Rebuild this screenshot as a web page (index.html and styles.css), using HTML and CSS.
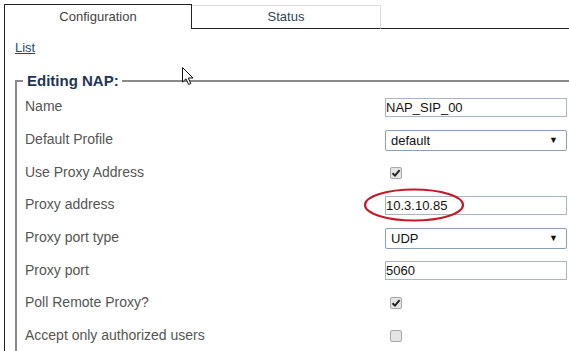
FILE: index.html
```html
<!DOCTYPE html>
<html lang="en">
<head>
  <meta charset="UTF-8" />
  <title>NAP Configuration</title>
  <link rel="stylesheet" href="styles.css">
</head>
<body>
  <!-- Tabs -->
  <div class="tabs">
    <div class="tab active">Configuration</div>
    <div class="tab">Status</div>
    <div class="tab-fill"></div>
  </div>

  <div class="panel">
    <a class="list-link" href="#">List</a>

    <fieldset class="nap">
      <legend>Editing NAP:</legend>

      <div class="row">
        <span class="label">Name</span>
        <input class="text" type="text" value="NAP_SIP_00">
      </div>
      <div class="row">
        <span class="label">Default Profile</span>
        <div class="select"><span>default</span><span class="arrow">&#9660;</span></div>
      </div>
      <div class="row">
        <span class="label">Use Proxy Address</span>
        <span class="check on"><svg viewBox="0 0 10 10" width="10" height="10"><path d="M1.5 5.2 L4 7.6 L8.6 2.2" fill="none" stroke="#222" stroke-width="2"/></svg></span>
      </div>
      <div class="row">
        <span class="label">Proxy address</span>
        <input class="text" type="text" value="10.3.10.85">
      </div>
      <div class="row">
        <span class="label">Proxy port type</span>
        <div class="select"><span>UDP</span><span class="arrow">&#9660;</span></div>
      </div>
      <div class="row">
        <span class="label">Proxy port</span>
        <input class="text" type="text" value="5060">
      </div>
      <div class="row">
        <span class="label">Poll Remote Proxy?</span>
        <span class="check on"><svg viewBox="0 0 10 10" width="10" height="10"><path d="M1.5 5.2 L4 7.6 L8.6 2.2" fill="none" stroke="#222" stroke-width="2"/></svg></span>
      </div>
      <div class="row">
        <span class="label">Accept only authorized users</span>
        <span class="check"></span>
      </div>
    </fieldset>
  </div>

  <!-- annotation: red circle round the proxy address -->
  <svg class="mark" width="104" height="36" viewBox="0 0 104 36">
    <ellipse cx="52" cy="18" rx="49" ry="15.5" fill="none" stroke="#c41a2a" stroke-width="2.2"/>
  </svg>

  <!-- mouse pointer -->
  <svg class="cursor" width="14" height="20" viewBox="0 0 14 20">
    <path d="M0.5 0.5 L0.5 15 L4 11.8 L6.6 17.5 L8.8 16.5 L6.3 11 L11 11 Z" fill="#fff" stroke="#111" stroke-width="1"/>
  </svg>
</body>
</html>
```

FILE: styles.css
```css
body {
  font-family: Arial, "Liberation Sans", sans-serif;
  background: #fff;
  margin: 0;
  position: relative;
  height: 351px;
  overflow: hidden;
}
.tabs {
  display: flex;
  margin: 4px 0 0 4px;
  height: 25px;
}
.tab {
  width: 188px;
  margin-top: 1px;
  border-top: 1px solid #dcdcdc;
  border-right: 1px solid #dcdcdc;
  border-bottom: 1px solid #222;
  color: #2f4256;
  font-size: 13px;
  line-height: 22px;
  text-align: center;
}
.tab.active {
  width: 186px;
  margin-top: 0;
  border: 1px solid #222;
  border-bottom: none;
  color: #444;
  line-height: 23px;
}
.tab-fill {
  flex: 1;
  border-bottom: 1px solid #222;
}
.panel {
  margin-left: 4px;
  border-left: 1px solid #222;
  padding: 0 0 0 10px;
  height: 330px;
}
.list-link {
  display: inline-block;
  margin-top: 11px;
  font-size: 13px;
  line-height: 16px;
  color: #1f4a72;
}
.nap {
  margin: 16px -1px 0 0;
  padding: 0 0 0 8px;
  border-style: solid;
  border-width: 2px 1px 1px 2px;
  border-color: #8a8a8a;
}
.nap legend {
  margin-left: -2px;
  padding: 0 3px 0 4px;
  font-size: 15px;
  font-weight: bold;
  line-height: 18px;
  color: #1f3557;
}
.row {
  display: grid;
  grid-template-columns: 1fr 182px;
  align-items: center;
  height: 32.7px;
  padding-right: 2px;
}
.label {
  font-size: 14px;
  color: #555;
}
.text {
  box-sizing: border-box;
  height: 19px;
  width: 182px;
  margin: 2px 0 0 0;
  padding: 0;
  border: 1px solid #a7b6c6;
  font-family: Arial, "Liberation Sans", sans-serif;
  font-size: 13px;
  color: #111;
  outline: none;
}
.select {
  box-sizing: border-box;
  height: 21px;
  margin-top: 2px;
  display: flex;
  justify-content: space-between;
  align-items: center;
  padding: 0 8px 0 5px;
  border: 1px solid #8aa0b8;
  border-radius: 2px;
  font-size: 13px;
  color: #111;
}
.arrow {
  font-size: 9px;
  color: #111;
}
.check {
  box-sizing: border-box;
  width: 12px;
  height: 12px;
  margin: 2px 0 0 5px;
  display: flex;
  align-items: center;
  justify-content: center;
  background: #e4e4e4;
  border: 1px solid #a8a8a8;
  border-radius: 2px;
}
.mark {
  position: absolute;
  left: 362px;
  top: 187px;
}
.cursor {
  position: absolute;
  left: 182px;
  top: 67px;
}
```
